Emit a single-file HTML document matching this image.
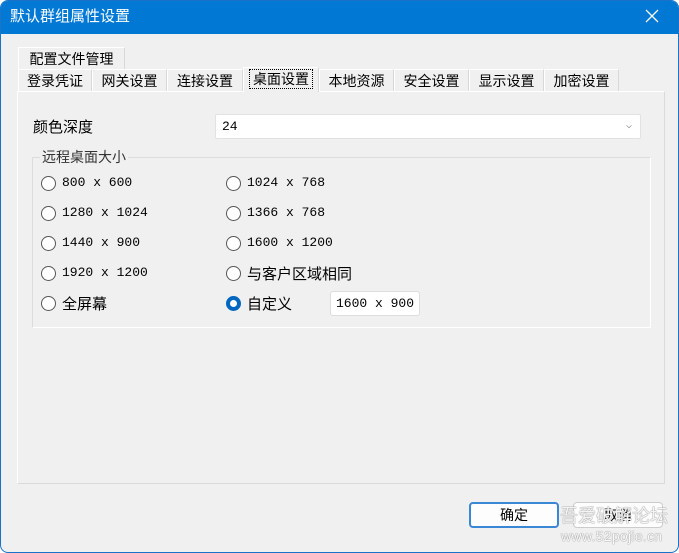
<!DOCTYPE html>
<html><head><meta charset="utf-8"><style>
*{margin:0;padding:0;box-sizing:border-box}
body{width:679px;height:553px;background:#fff;position:relative;overflow:hidden;font-family:"Liberation Sans","Noto Sans CJK SC",sans-serif;font-size:14px;color:#000}
.win{position:absolute;left:0;top:0;width:679px;height:553px;border:1px solid #1a73c9;border-radius:8px 8px 8px 8px;background:#f0f0f0;overflow:hidden}
.title{position:absolute;left:0;top:0;width:100%;height:33px;background:#0078d4;color:#fff;font-size:15px;line-height:32px;padding-left:9px}
.x{position:absolute;right:18px;top:7px;width:16px;height:16px}
.a{position:absolute;white-space:nowrap}
.tab{position:absolute;height:22px;line-height:22px;background:#f0f0f0;border-top:1px solid #fff;border-left:1px solid #fff;border-right:1px solid #d8d8d8;text-align:center;font-size:14px}
.panel{position:absolute;left:16px;top:90px;width:648px;height:393px;border:1px solid #fff;border-right-color:#dadada;border-bottom-color:#dadada;background:#f0f0f0}
.r{position:absolute;width:15px;height:15px;border:1px solid #555;border-radius:50%;background:#fff}
.t{position:absolute;font-family:"Liberation Mono","Noto Sans CJK SC",monospace;font-size:13px;white-space:nowrap}
.btn{position:absolute;height:26px;width:90px;border:1px solid #ccc;border-radius:4px;background:#fdfdfd;text-align:center;line-height:24px;font-size:14px}
</style></head><body>
<div class="win">
<div class="title">默认群组属性设置
<svg class="x" viewBox="0 0 16 16"><path d="M2 2L14 14M14 2L2 14" stroke="#fff" stroke-width="1.3"/></svg></div>
<div class="tab" style="left:17px;top:46px;width:107px">配置文件管理</div>
<div class="tab" style="left:17px;top:68px;width:74px">登录凭证</div>
<div class="tab" style="left:91px;top:68px;width:75px">网关设置</div>
<div class="tab" style="left:166px;top:68px;width:76px">连接设置</div>
<div class="tab" style="left:318px;top:68px;width:75px">本地资源</div>
<div class="tab" style="left:393px;top:68px;width:75px">安全设置</div>
<div class="tab" style="left:468px;top:68px;width:75px">显示设置</div>
<div class="tab" style="left:543px;top:68px;width:75px">加密设置</div>
<div class="panel"></div>
<div class="tab" style="left:242px;top:66px;width:76px;height:25px;border-bottom:none;z-index:2"><span style="display:inline-block;border:1px dotted #000;line-height:18px;padding:0 3px;margin-top:1px">桌面设置</span></div>
<div class="a" style="left:32px;top:115px;font-size:15px">颜色深度</div>
<div class="a" style="left:214px;top:113px;width:426px;height:25px;background:#fff;border:1px solid #e2e2e2;border-radius:2px;font-family:'Liberation Mono',monospace;font-size:13px;line-height:23px;padding-left:6px">24<span style="position:absolute;right:8px;top:0;color:#777;font-size:10px">⌵</span></div>
<div class="a" style="left:31px;top:156px;width:619px;height:171px;border:1px solid #dcdcdc;border-right-color:#fff;border-bottom-color:#fff"></div>
<div class="a" style="left:39px;top:146px;background:#f0f0f0;padding:0 2px;color:#333">远程桌面大小</div>
<div class="r" style="left:40px;top:175px"></div><div class="t" style="left:61px;top:174px">800 x 600</div>
<div class="r" style="left:225px;top:175px"></div><div class="t" style="left:246px;top:174px">1024 x 768</div>
<div class="r" style="left:40px;top:205px"></div><div class="t" style="left:61px;top:204px">1280 x 1024</div>
<div class="r" style="left:225px;top:205px"></div><div class="t" style="left:246px;top:204px">1366 x 768</div>
<div class="r" style="left:40px;top:235px"></div><div class="t" style="left:61px;top:234px">1440 x 900</div>
<div class="r" style="left:225px;top:235px"></div><div class="t" style="left:246px;top:234px">1600 x 1200</div>
<div class="r" style="left:40px;top:265px"></div><div class="t" style="left:61px;top:264px">1920 x 1200</div>
<div class="r" style="left:225px;top:265px"></div><div class="a" style="left:246px;top:262px;font-size:15px">与客户区域相同</div>
<div class="r" style="left:40px;top:295px"></div><div class="a" style="left:61px;top:292px;font-size:15px">全屏幕</div>
<div class="r" style="left:225px;top:295px;border:4px solid #0067c0;background:#fff"></div><div class="a" style="left:246px;top:292px;font-size:15px">自定义</div>
<div class="a" style="left:329px;top:290px;width:90px;height:25px;background:#fff;border:1px solid #ddd;border-radius:3px;font-family:'Liberation Mono',monospace;font-size:13px;line-height:23px;text-align:center">1600 x 900</div>
<div class="btn" style="left:468px;top:501px;border:2px solid #3a87d6;line-height:22px">确定</div>
<div class="btn" style="left:572px;top:501px">取消</div>
<div class="a" style="left:559px;top:501px;color:rgba(255,255,255,.9);font-size:18px;text-shadow:0 0 1px #888,0 0 1px #888">吾爱破解论坛</div>
<div class="a" style="left:560px;top:527px;color:rgba(255,255,255,.95);font-size:14px;letter-spacing:.3px;text-shadow:0 0 1px #888,0 0 1px #888">www.52pojie.cn</div>
</div>
</body></html>
